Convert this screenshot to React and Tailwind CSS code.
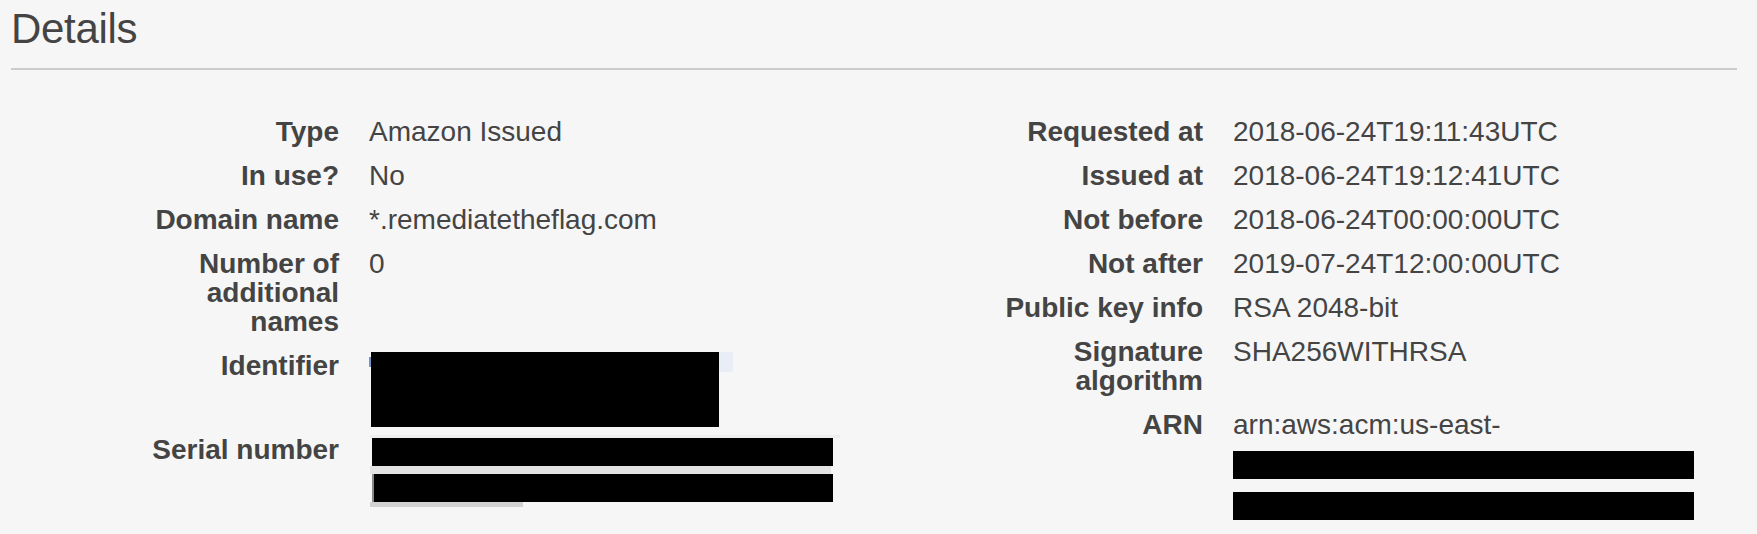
import React from 'react'

const left = [
  { label: 'Type', value: 'Amazon Issued' },
  { label: 'In use?', value: 'No' },
  { label: 'Domain name', value: '*.remediatetheflag.com' },
  { label: 'Number of additional names', value: '0' },
]

const right = [
  { label: 'Requested at', value: '2018-06-24T19:11:43UTC' },
  { label: 'Issued at', value: '2018-06-24T19:12:41UTC' },
  { label: 'Not before', value: '2018-06-24T00:00:00UTC' },
  { label: 'Not after', value: '2019-07-24T12:00:00UTC' },
  { label: 'Public key info', value: 'RSA 2048-bit' },
  { label: 'Signature algorithm', value: 'SHA256WITHRSA' },
]

function Row({ label, children, className = 'mb-[15px]' }) {
  return (
    <div className={`flex ${className}`}>
      <div className="ml-[123px] w-[205px] shrink-0 text-right font-bold leading-[29px]">{label}</div>
      <div className="ml-[30px] leading-[29px]">{children}</div>
    </div>
  )
}

// redacted block, blacked out in the screenshot
function Redacted({ w, h, className = '' }) {
  return <div className={`bg-black ${className}`} style={{ width: w, height: h }} />
}

export default function App() {
  return (
    <div className="min-h-screen bg-[#f6f6f6] pl-[11px] pr-[20px] pt-[8px] text-[#444]"
         style={{ fontFamily: '"Liberation Sans", Arial, sans-serif' }}>
      <h1 className="text-[42px] leading-[42px] font-normal tracking-[-0.3px]">Details</h1>
      <div className="mt-[18px] h-[2px] bg-[#cccccc]" />

      <div className="mt-[47px] flex text-[28px]">
        <div className="w-[864px] shrink-0">
          {left.map(r => <Row key={r.label} label={r.label}>{r.value}</Row>)}
          <Row label="Identifier" className="mb-[8px]">
            <div className="flex">
              <div className="mt-[6px] h-[10px] w-[2px] bg-[#3b6cb3] opacity-70" />
              <Redacted w={348} h={75} className="mt-[1px]" />
              <div className="mt-[1px] h-[20px] w-[14px] bg-[#e9eef6]" />
            </div>
          </Row>
          <Row label="Serial number">
            <div className="ml-[1px] flex flex-col">
              <div className="h-[3px] w-[470px] bg-[#eeeeee]" />
              <Redacted w={461} h={28} className="ml-[2px]" />
              <div className="h-[8px] w-[461px] bg-[#e3e3e3]" />
              <Redacted w={461} h={28} className="ml-[2px] border-l-2 border-[#888]" />
              <div className="h-[5px] w-[153px] bg-[#d2d2d2]" />
            </div>
          </Row>
        </div>

        <div className="flex-1">
          {right.map(r => <Row key={r.label} label={r.label}>{r.value}</Row>)}
          <Row label="ARN" className="">
            <div>arn:aws:acm:us-east-</div>
            <Redacted w={461} h={28} className="mt-[12px]" />
            <Redacted w={461} h={28} className="mt-[13px]" />
          </Row>
        </div>
      </div>
    </div>
  )
}
